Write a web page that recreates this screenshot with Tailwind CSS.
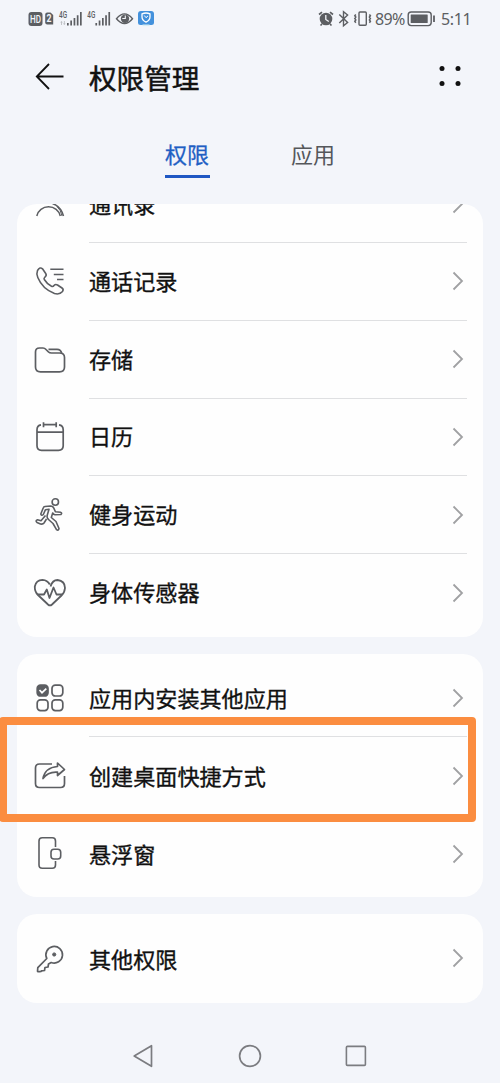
<!DOCTYPE html>
<html lang="zh-CN">
<head>
<meta charset="utf-8">
<title>权限管理</title>
<script src="https://cdn.jsdelivr.net/npm/@tailwindcss/browser@4"></script>
</head>
<body class="bg-[#f3f5fa]">
<div class="relative w-[500px] h-[1083px] overflow-hidden flex flex-col bg-[#f3f5fa] font-['Noto_Sans_CJK_SC',sans-serif] text-[#111]">

  <!-- status bar -->
  <header class="h-[38px] shrink-0 flex items-center justify-between pl-7 pr-[29px] text-[#5c5e62]">
    <svg class="w-[130px] h-[38px]" viewBox="28 0 130 38" fill="none">
      <rect x="28.5" y="12" width="14" height="14" rx="3" fill="#5c5e62"/>
      <text x="30" y="22.8" font-family="Roboto" font-weight="500" font-size="10.5" textLength="11" lengthAdjust="spacingAndGlyphs" fill="#f3f5fa">HD</text>
      <path d="M47.2 12.500H50.5L53.2 15V24.500H47.2Q45.2 24.500 45.2 22.500V14.500Q45.2 12.500 47.2 12.500Z" fill="#5c5e62"/>
      <text x="46.6" y="22.4" font-family="Roboto" font-weight="700" font-size="10" textLength="5" lengthAdjust="spacingAndGlyphs" fill="#f3f5fa">2</text>
      <g fill="#5c5e62">
        <text x="59" y="17.8" font-family="Roboto" font-weight="500" font-size="8.500" textLength="8" lengthAdjust="spacingAndGlyphs">4G</text>
        <path d="M61.5 21l-1.3 1.6h.9V25h.8v-2.4h.9zM64.3 25l1.3-1.6h-.9V21h-.8v2.4H63z" opacity=".4"/>
        <path id="bars" d="M67 23h1.7v2.5H67zM70.3 20.5h1.7v5h-1.7zM73.6 18h1.7v7.5h-1.7zM76.8 15.3h1.7v10.2h-1.7zM80 12h1.7v13.5H80z"/>
        <text x="87.3" y="17.8" font-family="Roboto" font-weight="500" font-size="8.500" textLength="8" lengthAdjust="spacingAndGlyphs">4G</text>
        <use href="#bars" x="28.4"/>
      </g>
      <path d="M116.5 18.7Q124.5 9 132.5 18.7Q124.5 28.400 116.5 18.7Z" stroke="#5c5e62" stroke-width="1.400"/>
      <circle cx="125" cy="18.7" r="4.2" fill="#5c5e62"/>
      <path d="M125.300 15.500v3h-3" stroke="#f3f5fa" stroke-width="1.1"/>
      <path d="M141 11h10q3 0 3 3v9q0 2-2.500 2H140.500q-2.500 0-2.500-2v-9q0-3 3-3Z" fill="#4391dc"/>
      <path d="M142 13.900q4-1.800 8 0v3q0 3.200-4 5.200q-4-2-4-5.200z" stroke="#fff" stroke-width="1.3"/>
      <path d="M144.300 15.500l1.700 2.200l2-1.800" stroke="#fff" stroke-width="1"/>
      <path d="M142.500 25.300h7" stroke="#d5ecf5" stroke-width="1.600"/>
    </svg>
    <div class="flex items-center">
      <svg class="w-[58px] h-[38px]" viewBox="317 0 58 38" fill="none" stroke="#5c5e62">
        <circle cx="326" cy="19" r="6.300" fill="#5c5e62" stroke="none"/>
        <path d="M319 14.500l3-2.300M333 14.500l-3-2.300M322 24l-1.500 1.500M330 24l1.500 1.500" stroke-width="1.700"/>
        <path d="M325.800 15v4.500l3 2" stroke="#f3f5fa" stroke-width="1.300"/>
        <path d="M339.300 14.500l8.300 8l-4.100 3.200V11.800l4.100 3.200l-8.300 8" stroke-width="1.400"/>
        <rect x="359" y="12" width="7.300" height="13.200" rx="1" stroke-width="1.400"/>
        <path d="M355.800 14.500l-1 1.300l1 1.300l-1 1.400l1 1.400l-1 1.400l1 1.400M369.400 14.500l1 1.300l-1 1.300l1 1.400l-1 1.400l1 1.400l-1 1.400" stroke-width="1.500"/>
      </svg>
      <span class="w-[32px] font-['Noto_Sans'] text-[16px] leading-[38px] tracking-[-0.6px]">89%</span>
      <svg class="w-[34px] h-[38px]" viewBox="407 0 34 38" fill="none">
        <rect x="408.200" y="12" width="23" height="13.600" rx="3" stroke="#5c5e62" stroke-width="1.400"/>
        <rect x="410.700" y="14.500" width="17" height="8.600" rx=".5" fill="#5c5e62"/>
        <path d="M434 15.500v6.500" stroke="#5c5e62" stroke-width="1.800"/>
      </svg>
      <span class="w-[30px] font-['Noto_Sans'] text-[16px] leading-[38px] tracking-[-0.4px]">5:11</span>
    </div>
  </header>

  <!-- title -->
  <div class="h-[78px] shrink-0 flex items-center pl-[35px] pr-[38px]">
    <svg class="w-[30px] h-[30px]" viewBox="0 0 30 30" fill="none" stroke="#111" stroke-width="1.800"><path d="M28.500 14.500H2M14 2L1.800 14.500L14 27"/></svg>
    <h1 class="ml-6 text-[27.600px] leading-[40px] font-normal [-webkit-text-stroke:0.5px]">权限管理</h1>
    <svg class="ml-auto w-[24px] h-[24px]" viewBox="0 0 24 24" fill="#111"><circle cx="4" cy="3.400" r="2.500"/><circle cx="20" cy="3.400" r="2.500"/><circle cx="4" cy="18.600" r="2.500"/><circle cx="20" cy="18.600" r="2.500"/></svg>
  </div>

  <!-- tabs -->
  <nav class="h-[88px] shrink-0 flex pt-[22px] pl-[165px] text-[22px] leading-[31px]">
    <div class="h-[40px] w-[45px] border-b-[3px] border-[#1f57c3] text-[#1f5fc4] [-webkit-text-stroke:0.3px]">权限</div>
    <div class="ml-[81px] text-[#55575b]">应用</div>
  </nav>

  <main class="px-[17px] flex flex-col gap-[17px] text-[22.100px] [-webkit-text-stroke:0.35px]">
    <section class="h-[433px] rounded-[20px] bg-[#fefefe] overflow-hidden flex flex-col justify-end pl-[15px] pr-4 pb-[5px]">
      <div class="h-[77.800px] shrink-0 flex items-center">
        <svg class="w-9 h-9 mr-[21px]" viewBox="0 0 36 36" fill="none" stroke="#5c5e62" stroke-width="1.500"><path d="M4.800 30a12 11.500 0 0 1 23.500 0M20.500 17.500q8.500 3 11 12.500"/><path d="M25 20.500q4 3.500 5 9.500" stroke-width="1"/></svg>
        <div class="h-full flex-1 flex items-center justify-between border-b border-[#dfe0e2]"><span>通讯录</span><svg class="w-[12px] h-[20px] mr-[3px]" viewBox="0 0 12 20" fill="none" stroke="#a0a1a3" stroke-width="1.800"><path d="M1.500 1.500L10 10L1.500 18.500"/></svg></div>
      </div>
      <div class="h-[77.800px] shrink-0 flex items-center">
        <svg class="w-9 h-9 mr-[21px]" viewBox="0 0 36 36" fill="none" stroke="#5c5e62" stroke-width="1.600" stroke-linejoin="round"><path d="M5.500 6.500Q8 2.500 10.500 4.800L13.700 9.500Q15 11.500 13 13Q11.500 14.200 12.300 15.500Q15 20 19.500 22.300Q21 23 22 21.500Q23.500 19.800 25.500 21L30 24Q32 25.500 30.500 27.500Q27.500 31 22.500 29.500Q10.500 25 5.800 13.500Q4.200 9.500 5.500 6.500Z"/><path d="M18.300 5.300H31.500M21.800 10.500H31.500M25 15.500H31.500"/></svg>
        <div class="h-full flex-1 flex items-center justify-between border-b border-[#dfe0e2]"><span class="pb-[2px]">通话记录</span><svg class="w-[12px] h-[20px] mr-[3px]" viewBox="0 0 12 20" fill="none" stroke="#a0a1a3" stroke-width="1.800"><path d="M1.500 1.500L10 10L1.500 18.500"/></svg></div>
      </div>
      <div class="h-[77.800px] shrink-0 flex items-center">
        <svg class="w-9 h-9 mr-[21px]" viewBox="0 0 36 36" fill="none" stroke="#5c5e62" stroke-width="1.700"><path d="M3.500 10Q3.500 6 7.500 6H11Q12.700 6 14 7.500L16.500 10Q17.500 11 19.500 11H27.500Q32.500 11 32.500 15.500V25Q32.500 29.800 27.500 29.800H8.500Q3.500 29.800 3.500 25Z"/><path d="M16.500 7.300H25Q29 7.300 29.700 11.500"/></svg>
        <div class="h-full flex-1 flex items-center justify-between border-b border-[#dfe0e2]"><span class="pb-[2px]">存储</span><svg class="w-[12px] h-[20px] mr-[3px]" viewBox="0 0 12 20" fill="none" stroke="#a0a1a3" stroke-width="1.800"><path d="M1.500 1.500L10 10L1.500 18.500"/></svg></div>
      </div>
      <div class="h-[77.800px] shrink-0 flex items-center">
        <svg class="w-9 h-9 mr-[21px]" viewBox="0 0 36 36" fill="none" stroke="#5c5e62" stroke-width="1.700"><path d="M9 4.800Q5 5.300 5 9.800V25.800Q5 30.300 9.500 30.300H26.500Q31.200 30.300 31.200 25.800V9.800Q31.200 5.300 27 4.800M5 12.100H31M11.500 2.300V7.300M24.200 2.300V7.300M11 4.600H25"/></svg>
        <div class="h-full flex-1 flex items-center justify-between border-b border-[#dfe0e2]"><span class="pb-[2px]">日历</span><svg class="w-[12px] h-[20px] mr-[3px]" viewBox="0 0 12 20" fill="none" stroke="#a0a1a3" stroke-width="1.800"><path d="M1.500 1.500L10 10L1.500 18.500"/></svg></div>
      </div>
      <div class="h-[77.800px] shrink-0 flex items-center">
        <svg class="w-9 h-9 mr-[21px]" viewBox="0 0 36 36" fill="none" stroke="#5c5e62" stroke-width="1.600" stroke-linejoin="round"><circle cx="23.300" cy="5" r="3.200"/><path d="M13 9.500L18.500 9Q21 9 21.800 11.200L23.500 14.800L28.500 15.200Q30.500 16 29 17.500L23 17.800Q21.500 17.500 20.700 16L19.300 20.500L24 24.500L27 31.500Q26.500 34 24.500 32.700L21 26.500L16.500 22.500Q14.500 21 15.300 18L17 12.200L13.500 12.700L11.300 17.500Q9.500 19.300 8.800 17L11.300 10.800Q11.700 9.700 13 9.500ZM14.500 22L12 26Q11 27.500 8.500 27L5 25.500Q3 23.500 5.500 22.700L9 23.700L13.500 18.500"/></svg>
        <div class="h-full flex-1 flex items-center justify-between border-b border-[#dfe0e2]"><span class="pb-[2px]">健身运动</span><svg class="w-[12px] h-[20px] mr-[3px]" viewBox="0 0 12 20" fill="none" stroke="#a0a1a3" stroke-width="1.800"><path d="M1.500 1.500L10 10L1.500 18.500"/></svg></div>
      </div>
      <div class="h-[77.800px] shrink-0 flex items-center">
        <svg class="w-9 h-9 mr-[21px]" viewBox="0 0 36 36" fill="none" stroke="#5c5e62" stroke-width="1.800" stroke-linejoin="round"><path d="M18.500 11.500Q20.500 5 25.500 5Q33 6 33 13Q32.500 18 29.500 20.500L20 29.500Q18 31.300 16 29.500L6 20Q2.500 16.500 2.800 11.500Q4 5 10.500 4.800Q15.500 5 17.800 9.500"/><path d="M6 19.500H12L14.800 14.500L17.500 23L21.500 12.500L24.500 19.500H30"/></svg>
        <div class="h-full flex-1 flex items-center justify-between"><span class="pb-[3px]">身体传感器</span><svg class="w-[12px] h-[20px] mr-[3px]" viewBox="0 0 12 20" fill="none" stroke="#a0a1a3" stroke-width="1.800"><path d="M1.500 1.500L10 10L1.500 18.500"/></svg></div>
      </div>
    </section>

    <section class="h-[243px] rounded-[20px] bg-[#fefefe] flex flex-col pl-[15px] pr-4 pt-[5px]">
      <div class="h-[77.800px] shrink-0 flex items-center">
        <svg class="w-9 h-9 mr-[21px]" viewBox="0 0 36 36" fill="none" stroke="#5c5e62" stroke-width="1.700"><rect x="5.200" y="5.200" width="10.800" height="10.800" rx="3.300" fill="#5c5e62"/><rect x="20" y="5.200" width="10.800" height="10.800" rx="3.300"/><rect x="5.200" y="19.800" width="10.800" height="10.800" rx="3.300"/><rect x="20" y="19.800" width="10.800" height="10.800" rx="3.300"/><path d="M7.500 10l2.500 2.700l4.300-4" stroke="#fff"/></svg>
        <div class="h-full flex-1 flex items-center justify-between border-b border-[#dfe0e2]"><span>应用内安装其他应用</span><svg class="w-[12px] h-[20px] mr-[3px] mt-[2px]" viewBox="0 0 12 20" fill="none" stroke="#a0a1a3" stroke-width="1.800"><path d="M1.500 1.500L10 10L1.500 18.500"/></svg></div>
      </div>
      <div class="h-[77.800px] shrink-0 flex items-center">
        <svg class="w-9 h-9 mr-[21px]" viewBox="0 0 36 36" fill="none" stroke="#5c5e62" stroke-width="1.700" stroke-linejoin="round"><path d="M20 6H7.500Q3.500 6 3.500 10V25.500Q3.500 29.500 7.500 29.500H28.500Q32.500 29.500 32.500 25.500V18"/><path d="M25.500 5L32.500 11.500L25.500 17.500V14.200Q16 13.500 11 20.500Q13 9.500 25.500 8.500Z"/></svg>
        <div class="h-full flex-1 flex items-center justify-between border-b border-[#dfe0e2]"><span>创建桌面快捷方式</span><svg class="w-[12px] h-[20px] mr-[3px] mt-[2px]" viewBox="0 0 12 20" fill="none" stroke="#a0a1a3" stroke-width="1.800"><path d="M1.500 1.500L10 10L1.500 18.500"/></svg></div>
      </div>
      <div class="h-[77.800px] shrink-0 flex items-center">
        <svg class="w-9 h-9 mr-[21px]" viewBox="0 0 36 36" fill="none" stroke="#5c5e62" stroke-width="1.600"><path d="M23.500 12V6Q23.500 2.800 20.300 2.800H10.300Q7 2.800 7 6V30Q7 33.300 10.300 33.300H20.300Q23.500 33.300 23.500 30V26"/><rect x="19" y="14.300" width="9.700" height="9.700" rx="3"/></svg>
        <div class="h-full flex-1 flex items-center justify-between"><span>悬浮窗</span><svg class="w-[12px] h-[20px] mr-[3px] mt-[1px]" viewBox="0 0 12 20" fill="none" stroke="#a0a1a3" stroke-width="1.800"><path d="M1.500 1.500L10 10L1.500 18.500"/></svg></div>
      </div>
    </section>

    <section class="h-[89px] rounded-[20px] bg-[#fefefe] flex items-center pl-[15px] pr-4">
      <svg class="w-9 h-9 mr-[21px]" viewBox="0 0 36 36" fill="none" stroke="#5c5e62" stroke-width="1.700" stroke-linejoin="round"><path d="M14.800 17.500A8.300 8.300 0 1 1 19.200 21.500L16.500 23L16 26L13 26.500L12.500 29.500L9.500 29.800L9 30.500Q5.500 31 5.500 30.300L5.800 26.700Z"/><circle cx="22.200" cy="13.500" r="1.600" fill="#5c5e62" stroke-width="1"/></svg>
      <div class="flex-1 flex items-center justify-between"><span>其他权限</span><svg class="w-[12px] h-[20px] mr-[3px]" viewBox="0 0 12 20" fill="none" stroke="#a0a1a3" stroke-width="1.800"><path d="M1.500 1.500L10 10L1.500 18.500"/></svg></div>
    </section>
  </main>

  <!-- system navigation -->
  <footer class="h-[80px] shrink-0 flex items-center justify-between pl-[132px] pr-[132px] pt-[25px]">
    <svg class="w-6 h-6" viewBox="0 0 24 24" fill="none" stroke="#7b7c80" stroke-width="1.700" stroke-linejoin="round"><path d="M2.200 12L19.500 1.700V22.300Z"/></svg>
    <svg class="w-6 h-6" viewBox="0 0 24 24" fill="none" stroke="#7b7c80" stroke-width="1.700"><circle cx="12" cy="12" r="10.400"/></svg>
    <svg class="w-6 h-6" viewBox="0 0 24 24" fill="none" stroke="#7b7c80" stroke-width="1.600"><rect x="2.400" y="2.400" width="19" height="19" rx="1"/></svg>
  </footer>

  <!-- highlight over the shortcut row -->
  <div class="absolute left-[-1px] top-[717px] w-[477px] h-[105px] border-8 border-[#fb8d40] rounded-[4px]"></div>
</div>
</body>
</html>
